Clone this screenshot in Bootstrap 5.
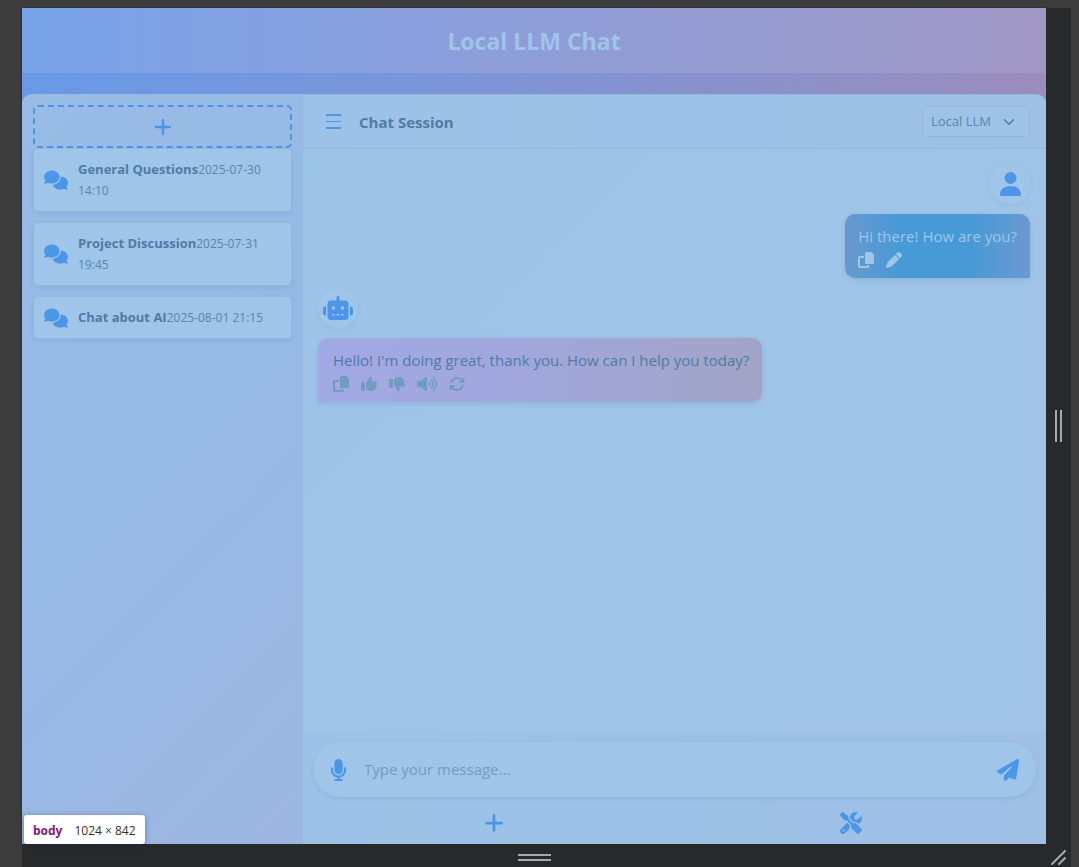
<!DOCTYPE html>
<html lang="en">
<head>
<meta charset="utf-8">
<meta name="viewport" content="width=device-width, initial-scale=1">
<title>Local LLM Chat</title>
<link href="https://cdn.jsdelivr.net/npm/bootstrap@5.3.0/dist/css/bootstrap.min.css" rel="stylesheet">
<style>
  :root { --accent: #4c96e9; --ink: #4f7ba5; --ink-soft: #5a84ad; --pale: #9fc5e9; --edge: #93b7dd; }
  body { background: #3c3c3c; color: var(--ink); font-family: "Open Sans", "Noto Sans", sans-serif; font-size: 15px; line-height: 24px; }
  .device { padding: 8px 8px 0 22px; }
  .viewport-page { background: linear-gradient(100deg, #6899e8 0%, #8292d2 50%, #a28bb6 100%); box-shadow: 0 0 0 1px #303236; }
  .rail-right { width: 25px; background: #28292b; }
  .rail-bottom { height: 23px; background: #28292b; }
  .grip { border: 0 solid #a9a9a9; }
  .grip-x { width: 33px; height: 7px; border-width: 2px 0; }
  .grip-y { width: 7px; height: 32px; border-width: 0 2px; }
  .corner { width: 25px; }
  .app-title { height: 65px; background: linear-gradient(90deg, #78a3e8 0%, #8e9dd8 50%, #a097c3 100%); color: var(--pale); margin-bottom: 21px; }
  .app-title h1 { font-size: 23px; font-weight: 700; line-height: 32px; }
  .shell { border-radius: 10px 10px 0 0; border-top: 1px solid var(--edge); background: #9dc3e7; overflow: hidden; }
  .history { width: 281px; padding: 10px 10px 10px 11px; border-right: 1px solid var(--edge); background: linear-gradient(135deg, #98bce6 0%, #97b9e5 50%, #9cb6e0 100%); }
  .new-chat { height: 43px; border: 2px dashed var(--accent); border-radius: 5px; background: transparent; color: var(--accent); }
  .session { gap: 10px; padding: 10px; border: 1px solid var(--edge); border-radius: 5px; background: var(--pale); box-shadow: 0 2px 5px rgba(90, 130, 180, .18); color: var(--ink-soft); font-size: 12px; line-height: 21px; margin: 0 0 10px 0; }
  .session strong { font-size: 13px; color: var(--ink); }
  .icon-accent { color: var(--accent); }
  svg { display: block; fill: currentColor; flex: none; }
  .plain-btn { border: 0; background: none; padding: 0; color: var(--accent); }
  .pane { background: linear-gradient(135deg, #9cc4e6, #a1c4e8); }
  .pane-head { height: 54px; padding: 0 16px 0 23px; gap: 18px; border-bottom: 1px solid var(--edge); background: linear-gradient(90deg, #9cc3e7, #9ec0e5); }
  .pane-head h2 { font-size: 15px; font-weight: 700; line-height: 24px; }
  .model-pick { width: 108px; height: 31px; padding: 0 24px 0 8px; color: var(--ink-soft); font-size: 13px; border-color: var(--edge); border-radius: 4px; background-color: #9dc4e7; background-position: right 14px center; background-size: 12px 12px; background-image: url("data:image/svg+xml,%3Csvg xmlns='http://www.w3.org/2000/svg' viewBox='0 0 16 16'%3E%3Cpath fill='none' stroke='%234f7ba5' stroke-linecap='round' stroke-linejoin='round' stroke-width='2' d='m2 5 6 6 6-6'/%3E%3C/svg%3E"); }
  .talk { padding: 15px 16px 15px 15px; gap: 10px; }
  .face { width: 40px; height: 40px; background: var(--pale); box-shadow: 0 2px 5px rgba(90, 130, 190, .12); }
  .bubble { height: 64px; padding: 10px 13px; border-radius: 10px; box-shadow: 0 2px 5px rgba(80, 120, 170, .2); }
  .bubble-user { background: linear-gradient(90deg, #6a98cf 0%, #489ad6 30%, #489ad6 68%, #6b99d0 100%); color: var(--pale); border-bottom-right-radius: 0; }
  .bubble-bot { padding-left: 15px; background: linear-gradient(90deg, #a1a9e5 0%, #a1a7dc 45%, #a1a4c6 100%); border-bottom-left-radius: 0; }
  .bubble .plain-btn { color: #6f9cbf; }
  .bubble-user .plain-btn { color: var(--pale); }
  .tools-row { gap: 12px; padding-top: 4px; }
  .composer { padding: 11px 10px 0; background: linear-gradient(90deg, #9cc3e7, #9fbfe5); }
  .pill { height: 55px; padding: 0 17px; background: #9fc5e8; box-shadow: 0 2px 5px rgba(90, 130, 190, .2); }
  .pill input, .pill input:focus { background: none; border: 0; box-shadow: none; color: var(--ink); font-size: 15px; padding: 0 17px; }
  .pill input::placeholder { color: #739cc3; opacity: 1; }
  .actions { height: 47px; padding: 5px 7px 0 3px; }
  .size-tip { left: 24px; bottom: 23px; height: 29px; padding: 2px 9px 0; gap: 12px; border-radius: 3px; background: #fff; color: #333; font-size: 12px; box-shadow: 0 1px 5px rgba(20, 40, 80, .45); }
  .size-tip b { color: #881280; }
</style>
</head>
<body>
<svg class="d-none" xmlns="http://www.w3.org/2000/svg">
  <symbol id="i-comments" viewBox="0 0 640 512"><path d="M208 352c114.9 0 208-78.8 208-176S322.9 0 208 0S0 78.8 0 176c0 38.6 14.7 74.3 39.6 103.4c-3.5 9.4-8.7 17.7-14.2 24.7c-4.8 6.2-9.7 11-13.3 14.3c-1.8 1.6-3.3 2.9-4.3 3.7c-.5 .4-.9 .7-1.1 .8l-.2 .2C1 327.2-1.4 334.4 .8 340.9S9.1 352 16 352c21.8 0 43.8-5.6 62.1-12.5c9.2-3.5 17.8-7.4 25.3-11.4C134.1 343.3 169.8 352 208 352zM448 176c0 112.3-99.1 196.9-216.5 207C255.8 457.4 336.4 512 432 512c38.2 0 73.9-8.7 104.7-23.9c7.5 4 16 7.9 25.2 11.4c18.3 6.9 40.3 12.5 62.1 12.5c6.9 0 13.1-4.5 15.2-11.1c2.1-6.6-.2-13.8-5.8-17.9l-.2-.2c-.2-.2-.6-.4-1.1-.8c-1-.8-2.5-2-4.3-3.7c-3.6-3.3-8.5-8.1-13.3-14.3c-5.5-7-10.7-15.4-14.2-24.7c24.9-29 39.6-64.7 39.6-103.4c0-92.8-84.9-168.9-192.6-175.5c.4 5.1 .6 10.3 .6 15.5z"/></symbol>
  <symbol id="i-robot" viewBox="0 0 640 512"><path d="M320 0c17.7 0 32 14.3 32 32V96H472c39.8 0 72 32.2 72 72V440c0 39.8-32.2 72-72 72H168c-39.8 0-72-32.2-72-72V168c0-39.8 32.2-72 72-72H288V32c0-17.7 14.3-32 32-32zM208 384c-8.8 0-16 7.2-16 16s7.2 16 16 16h32c8.8 0 16-7.2 16-16s-7.2-16-16-16H208zm96 0c-8.8 0-16 7.2-16 16s7.2 16 16 16h32c8.8 0 16-7.2 16-16s-7.2-16-16-16H304zm96 0c-8.8 0-16 7.2-16 16s7.2 16 16 16h32c8.8 0 16-7.2 16-16s-7.2-16-16-16H400zM264 256a40 40 0 1 0 -80 0 40 40 0 1 0 80 0zm152 40a40 40 0 1 0 0-80 40 40 0 1 0 0 80zM48 224H64V416H48c-26.5 0-48-21.5-48-48V272c0-26.5 21.5-48 48-48zm544 0c26.5 0 48 21.5 48 48v96c0 26.5-21.5 48-48 48H576V224h16z"/></symbol>
  <symbol id="i-user" viewBox="0 0 448 512"><path d="M224 256A128 128 0 1 0 224 0a128 128 0 1 0 0 256zm-45.7 48C79.8 304 0 383.8 0 482.3C0 498.7 13.3 512 29.7 512H418.3c16.4 0 29.7-13.3 29.7-29.7C448 383.8 368.2 304 269.7 304H178.3z"/></symbol>
  <symbol id="i-send" viewBox="0 0 512 512"><path d="M498.1 5.6c10.1 7 15.4 19.1 13.5 31.2l-64 416c-1.5 9.7-7.4 18.2-16 23s-18.9 5.4-28 1.6L284 427.7l-68.5 74.1c-8.9 9.7-22.9 12.9-35.2 8.1S160 493.2 160 480V396.4c0-4 1.5-7.8 4.2-10.7L331.8 202.8c5.8-6.3 5.6-16-.4-22s-15.7-6.4-22-.7L106 360.8 17.7 316.6C7.1 311.3 .3 300.7 0 288.9s5.9-22.8 16.1-28.7l448-256c10.7-6.1 23.9-5.5 34 1.4z"/></symbol>
  <symbol id="i-mic" viewBox="0 0 384 512"><path d="M192 0C139 0 96 43 96 96V256c0 53 43 96 96 96s96-43 96-96V96c0-53-43-96-96-96zM64 216c0-13.3-10.7-24-24-24s-24 10.7-24 24v40c0 89.1 66.2 162.7 152 174.4V464H120c-13.3 0-24 10.7-24 24s10.7 24 24 24h72 72c13.3 0 24-10.7 24-24s-10.7-24-24-24H216V430.4c85.8-11.7 152-85.3 152-174.4V216c0-13.3-10.7-24-24-24s-24 10.7-24 24v40c0 70.7-57.3 128-128 128s-128-57.3-128-128V216z"/></symbol>
  <symbol id="i-plus" viewBox="0 0 448 512"><path d="M256 80c0-17.7-14.3-32-32-32s-32 14.3-32 32V224H48c-17.7 0-32 14.3-32 32s14.3 32 32 32H192V432c0 17.7 14.3 32 32 32s32-14.3 32-32V288H400c17.7 0 32-14.3 32-32s-14.3-32-32-32H256V80z"/></symbol>
  <symbol id="i-tools" viewBox="0 0 512 512"><path d="M78.6 5C69.1-2.4 55.6-1.5 47 7L7 47c-8.5 8.5-9.4 22-2.1 31.6l80 104c4.5 5.9 11.6 9.4 19 9.4h54.1l109 109c-14.7 29-10 65.4 14.3 89.6l112 112c12.5 12.5 32.8 12.5 45.3 0l64-64c12.5-12.5 12.5-32.8 0-45.3l-112-112c-24.2-24.2-60.6-29-89.6-14.3l-109-109V104c0-7.5-3.5-14.5-9.4-19L78.6 5zM19.9 396.1C7.2 408.8 0 426.1 0 444.1C0 481.6 30.4 512 67.9 512c18 0 35.3-7.2 48-19.9L233.7 374.3c-7.8-20.9-9-43.6-3.6-65.1l-61.7-61.7L19.9 396.1zM512 144c0-10.5-1.1-20.7-3.2-30.5c-2.4-11.2-16.1-14.1-24.2-6l-63.9 63.9c-3 3-7.1 4.7-11.3 4.7H352c-8.8 0-16-7.2-16-16V102.6c0-4.2 1.7-8.3 4.7-11.3l63.9-63.9c8.1-8.1 5.2-21.8-6-24.2C388.7 1.1 378.5 0 368 0C288.5 0 224 64.5 224 144l0 .8 85.3 85.3c36-9.1 75.8 .5 104 28.7L429 274.5c49-23 83-72.8 83-130.5zM56 432a24 24 0 1 1 48 0 24 24 0 1 1 -48 0z"/></symbol>
  <symbol id="i-copy" viewBox="0 0 512 512"><path d="M272 0H420L512 92V336a48 48 0 0 1-48 48H272a48 48 0 0 1-48-48V48a48 48 0 0 1 48-48zM48 128H192v64H64V448H288v-32h64v48a48 48 0 0 1-48 48H48a48 48 0 0 1-48-48V176a48 48 0 0 1 48-48z"/></symbol>
  <symbol id="i-pen" viewBox="0 0 512 512"><path d="M362.7 19.3L314.3 67.7 444.3 197.7l48.4-48.4c25-25 25-65.5 0-90.5L453.3 19.3c-25-25-65.5-25-90.5 0zm-71 71L58.6 323.5c-10.4 10.4-18 23.3-22.2 37.4L1 481.2C-1.5 489.7 .8 498.8 7 505s15.3 8.5 23.7 6.1l120.3-35.4c14.1-4.2 27-11.8 37.4-22.2L421.7 220.3 291.7 90.3z"/></symbol>
  <symbol id="i-up" viewBox="0 0 512 512"><path id="thumb-hand" d="M313.4 32.9c26 5.2 42.9 30.5 37.7 56.5l-2.3 11.4c-5.3 26.7-15.1 52.1-28.8 75.2H464c26.5 0 48 21.5 48 48c0 18.5-10.5 34.6-25.9 42.6C497 275.4 504 288.9 504 304c0 23.4-16.8 42.9-38.9 47.1c4.4 7.3 6.9 15.8 6.9 24.9c0 21.3-13.9 39.4-33.1 45.6c.7 3.3 1.1 6.8 1.1 10.4c0 26.5-21.5 48-48 48H294.5c-19 0-37.5-5.6-53.3-16.1l-38.5-25.7C176 420.4 160 390.4 160 358.3V247.1c0-29.2 13.3-56.7 36-75l7.4-5.9c26.5-21.2 44.6-51 51.2-84.2l2.3-11.4c5.2-26 30.5-42.9 56.5-37.7z"/><rect y="192" width="128" height="288" rx="32"/></symbol>
  <symbol id="i-down" viewBox="0 0 512 512"><use href="#thumb-hand" transform="matrix(1 0 0 -1 0 512)"/><rect y="96" width="128" height="288" rx="32"/></symbol>
  <symbol id="i-volume" viewBox="0 0 640 512"><path d="M533.6 32.5C598.5 85.3 640 165.8 640 256s-41.5 170.8-106.4 223.5c-10.3 8.4-25.4 6.8-33.8-3.5s-6.8-25.4 3.5-33.8C557.5 398.2 592 331.2 592 256s-34.5-142.2-88.7-186.3c-10.3-8.4-11.8-23.5-3.5-33.8s23.5-11.8 33.8-3.5zM473.1 107c43.2 35.2 70.9 88.9 70.9 149s-27.7 113.8-70.9 149c-10.3 8.4-25.4 6.8-33.8-3.5s-6.8-25.4 3.5-33.8C475.3 341.3 496 301.1 496 256s-20.7-85.3-53.2-111.8c-10.3-8.4-11.8-23.5-3.5-33.8s23.5-11.8 33.8-3.5zm-60.5 74.5C434.1 199.1 448 225.9 448 256s-13.9 56.9-35.4 74.5c-10.3 8.4-25.4 6.8-33.8-3.5s-6.8-25.4 3.5-33.8C393.1 284.4 400 271 400 256s-6.9-28.4-17.7-37.3c-10.3-8.4-11.8-23.5-3.5-33.8s23.5-11.8 33.8-3.5zM301.1 34.8C312.6 40 320 51.4 320 64V448c0 12.6-7.4 24-18.9 29.2s-25 3.1-34.4-5.3L131.8 352H64c-35.3 0-64-28.7-64-64V224c0-35.3 28.7-64 64-64h67.8L266.7 40.1c9.4-8.4 22.9-10.4 34.4-5.3z"/></symbol>
  <symbol id="i-rotate" viewBox="0 0 512 512"><path d="M105.1 202.6c7.7-21.8 20.2-42.3 37.8-59.8c62.5-62.5 163.8-62.5 226.3 0L386.3 160H352c-17.7 0-32 14.3-32 32s14.3 32 32 32H463.9c17.7 0 32-14.3 32-32V80c0-17.7-14.3-32-32-32s-32 14.3-32 32v35.2L414.4 97.6c-87.5-87.5-229.3-87.5-316.8 0C73.2 122 55.6 150.7 44.8 181.4c-5.9 16.7 2.9 34.9 19.5 40.8s34.9-2.9 40.8-19.5zM39 289.3c-5 1.5-9.8 4.2-13.7 8.2c-4 4-6.7 8.8-8.1 14c-.3 1.2-.6 2.5-.8 3.8c-.3 1.7-.4 3.4-.4 5.1V432c0 17.7 14.3 32 32 32s32-14.3 32-32V396.9l17.6 17.5c87.5 87.4 229.3 87.4 316.7 0c24.4-24.4 42.1-53.1 52.9-83.7c5.9-16.7-2.9-34.9-19.5-40.8s-34.9 2.9-40.8 19.5c-7.7 21.8-20.2 42.3-37.8 59.8c-62.5 62.5-163.8 62.5-226.3 0L125.6 352H160c17.7 0 32-14.3 32-32s-14.3-32-32-32H48.4c-1.6 0-3.2 .1-4.8 .3s-3.1 .5-4.6 1z"/></symbol>
</svg>

<div class="device position-relative vh-100 d-flex flex-column">
  <div class="d-flex flex-fill">
    <div class="viewport-page d-flex flex-column flex-fill">
      <header class="app-title d-flex align-items-center justify-content-center">
        <h1 class="m-0">Local LLM Chat</h1>
      </header>
      <div class="shell d-flex flex-fill">
        <aside class="history flex-shrink-0">
          <button type="button" class="new-chat w-100 d-flex align-items-center justify-content-center p-0" aria-label="New chat"><svg width="18" height="20"><use href="#i-plus"/></svg></button>
          <ul class="list-unstyled m-0">
            <li class="session d-flex align-items-center"><svg class="icon-accent" width="24" height="20"><use href="#i-comments"/></svg><div><strong>General Questions</strong>2025-07-30 14:10</div></li>
            <li class="session d-flex align-items-center"><svg class="icon-accent" width="24" height="20"><use href="#i-comments"/></svg><div><strong>Project Discussion</strong>2025-07-31 19:45</div></li>
            <li class="session d-flex align-items-center"><svg class="icon-accent" width="24" height="20"><use href="#i-comments"/></svg><div><strong>Chat about AI</strong>2025-08-01 21:15</div></li>
          </ul>
        </aside>
        <main class="pane flex-fill d-flex flex-column">
          <div class="pane-head d-flex align-items-center">
            <button type="button" class="plain-btn" aria-label="Toggle sessions"><svg width="15" height="15" viewBox="0 0 15 15"><path d="M0 0h15v2H0zM0 7h15v1H0zM0 13h15v2H0z"/></svg></button>
            <h2 class="mb-0">Chat Session</h2>
            <select class="form-select model-pick ms-auto" aria-label="Model"><option>Local LLM</option></select>
          </div>
          <div class="talk flex-fill d-flex flex-column">
            <div class="face rounded-circle d-flex align-items-center justify-content-center align-self-end icon-accent"><svg width="21" height="24"><use href="#i-user"/></svg></div>
            <div class="bubble bubble-user align-self-end">
              <div>Hi there! How are you?</div>
              <div class="tools-row d-flex">
                <button type="button" class="plain-btn" aria-label="Copy"><svg width="16" height="16"><use href="#i-copy"/></svg></button>
                <button type="button" class="plain-btn" aria-label="Edit"><svg width="16" height="16"><use href="#i-pen"/></svg></button>
              </div>
            </div>
            <div class="face rounded-circle d-flex align-items-center justify-content-center align-self-start icon-accent"><svg width="30" height="24"><use href="#i-robot"/></svg></div>
            <div class="bubble bubble-bot align-self-start">
              <div>Hello! I'm doing great, thank you. How can I help you today?</div>
              <div class="tools-row d-flex">
                <button type="button" class="plain-btn" aria-label="Copy"><svg width="16" height="16"><use href="#i-copy"/></svg></button>
                <button type="button" class="plain-btn" aria-label="Like"><svg width="16" height="16"><use href="#i-up"/></svg></button>
                <button type="button" class="plain-btn" aria-label="Dislike"><svg width="16" height="16"><use href="#i-down"/></svg></button>
                <button type="button" class="plain-btn" aria-label="Read aloud"><svg width="20" height="16"><use href="#i-volume"/></svg></button>
                <button type="button" class="plain-btn" aria-label="Regenerate"><svg width="16" height="16"><use href="#i-rotate"/></svg></button>
              </div>
            </div>
          </div>
          <div class="composer">
            <div class="pill rounded-pill d-flex align-items-center">
              <button type="button" class="plain-btn" aria-label="Dictate"><svg width="17" height="22"><use href="#i-mic"/></svg></button>
              <input class="form-control" type="text" placeholder="Type your message..." aria-label="Message">
              <button type="button" class="plain-btn" aria-label="Send"><svg width="22" height="22"><use href="#i-send"/></svg></button>
            </div>
            <div class="actions row g-0 align-items-center">
              <div class="col d-flex justify-content-center"><button type="button" class="plain-btn" aria-label="Add"><svg width="22" height="22"><use href="#i-plus"/></svg></button></div>
              <div class="col d-flex justify-content-center"><button type="button" class="plain-btn" aria-label="Tools"><svg width="22" height="22"><use href="#i-tools"/></svg></button></div>
            </div>
          </div>
        </main>
      </div>
    </div>
    <div class="rail-right d-flex align-items-center justify-content-center"><span class="grip grip-y"></span></div>
  </div>
  <div class="rail-bottom d-flex align-items-center">
    <div class="flex-fill d-flex justify-content-center pt-1"><span class="grip grip-x"></span></div>
    <div class="corner d-flex justify-content-center pt-1"><svg width="16" height="16" viewBox="0 0 16 16" fill="none" stroke="#a9a9a9" stroke-width="2" stroke-linecap="round"><path d="M1 14 14 1M8 14 14 8"/></svg></div>
  </div>
  <div class="size-tip position-absolute d-flex align-items-center"><b>body</b><span>1024 × 842</span></div>
</div>
<script src="https://cdn.jsdelivr.net/npm/bootstrap@5.3.0/dist/js/bootstrap.bundle.min.js"></script>
</body>
</html>
